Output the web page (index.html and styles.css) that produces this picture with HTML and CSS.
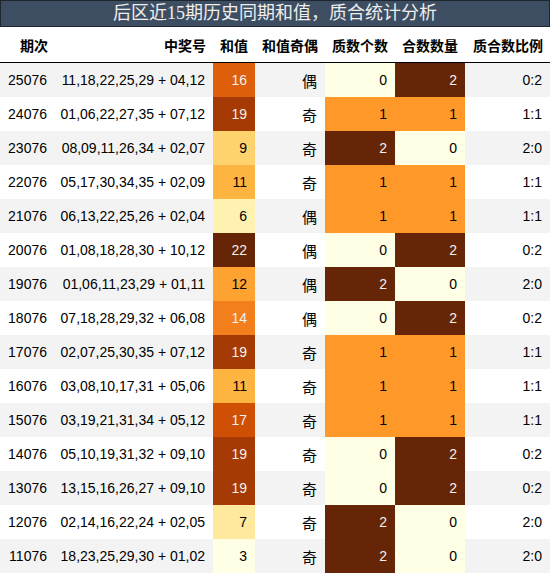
FILE: index.html
```html
<!DOCTYPE html>
<html lang="zh">
<head>
  <meta charset="UTF-8" />
  <title>后区近15期历史同期和值</title>
  <link rel="stylesheet" href="styles.css">
</head>
<body>

<div class="caption">后区近15期历史同期和值，质合统计分析</div>

<table class="stats">
  <colgroup>
    <col class="c-issue"><col class="c-nums"><col class="c-sum"><col class="c-parity">
    <col class="c-prime"><col class="c-comp"><col class="c-ratio">
  </colgroup>
  <thead>
    <tr>
      <th>期次</th><th>中奖号</th><th>和值</th><th>和值奇偶</th><th>质数个数</th><th>合数数量</th><th>质合数比例</th>
    </tr>
  </thead>
  <tbody>
    <tr><td>25076</td><td>11,18,22,25,29 + 04,12</td><td class="lt" style="background:#dd5f0c">16</td><td class="cjk">偶</td><td style="background:#ffffe5">0</td><td class="lt" style="background:#662506">2</td><td>0:2</td></tr>
    <tr><td>24076</td><td>01,06,22,27,35 + 07,12</td><td class="lt" style="background:#a63a04">19</td><td class="cjk">奇</td><td style="background:#fe9929">1</td><td style="background:#fe9929">1</td><td>1:1</td></tr>
    <tr><td>23076</td><td>08,09,11,26,34 + 02,07</td><td style="background:#fed36e">9</td><td class="cjk">奇</td><td class="lt" style="background:#662506">2</td><td style="background:#ffffe5">0</td><td>2:0</td></tr>
    <tr><td>22076</td><td>05,17,30,34,35 + 02,09</td><td style="background:#feb441">11</td><td class="cjk">奇</td><td style="background:#fe9929">1</td><td style="background:#fe9929">1</td><td>1:1</td></tr>
    <tr><td>21076</td><td>06,13,22,25,26 + 02,04</td><td style="background:#fff2b1">6</td><td class="cjk">偶</td><td style="background:#fe9929">1</td><td style="background:#fe9929">1</td><td>1:1</td></tr>
    <tr><td>20076</td><td>01,08,18,28,30 + 10,12</td><td class="lt" style="background:#662506">22</td><td class="cjk">偶</td><td style="background:#ffffe5">0</td><td class="lt" style="background:#662506">2</td><td>0:2</td></tr>
    <tr><td>19076</td><td>01,06,11,23,29 + 01,11</td><td style="background:#fea231">12</td><td class="cjk">偶</td><td class="lt" style="background:#662506">2</td><td style="background:#ffffe5">0</td><td>2:0</td></tr>
    <tr><td>18076</td><td>07,18,28,29,32 + 06,08</td><td class="lt" style="background:#f37f1c">14</td><td class="cjk">偶</td><td style="background:#ffffe5">0</td><td class="lt" style="background:#662506">2</td><td>0:2</td></tr>
    <tr><td>17076</td><td>02,07,25,30,35 + 07,12</td><td class="lt" style="background:#a63a04">19</td><td class="cjk">奇</td><td style="background:#fe9929">1</td><td style="background:#fe9929">1</td><td>1:1</td></tr>
    <tr><td>16076</td><td>03,08,10,17,31 + 05,06</td><td style="background:#feb441">11</td><td class="cjk">奇</td><td style="background:#fe9929">1</td><td style="background:#fe9929">1</td><td>1:1</td></tr>
    <tr><td>15076</td><td>03,19,21,31,34 + 05,12</td><td class="lt" style="background:#cf5004">17</td><td class="cjk">奇</td><td style="background:#fe9929">1</td><td style="background:#fe9929">1</td><td>1:1</td></tr>
    <tr><td>14076</td><td>05,10,19,31,32 + 09,10</td><td class="lt" style="background:#a63a04">19</td><td class="cjk">奇</td><td style="background:#ffffe5">0</td><td class="lt" style="background:#662506">2</td><td>0:2</td></tr>
    <tr><td>13076</td><td>13,15,16,26,27 + 09,10</td><td class="lt" style="background:#a63a04">19</td><td class="cjk">奇</td><td style="background:#ffffe5">0</td><td class="lt" style="background:#662506">2</td><td>0:2</td></tr>
    <tr><td>12076</td><td>02,14,16,22,24 + 02,05</td><td style="background:#fee99f">7</td><td class="cjk">奇</td><td class="lt" style="background:#662506">2</td><td style="background:#ffffe5">0</td><td>2:0</td></tr>
    <tr><td>11076</td><td>18,23,25,29,30 + 01,02</td><td style="background:#ffffe5">3</td><td class="cjk">奇</td><td class="lt" style="background:#662506">2</td><td style="background:#ffffe5">0</td><td>2:0</td></tr>
  </tbody>
</table>

</body>
</html>
```
FILE: styles.css
```css
body { margin: 0; padding: 0; background: #fff; font-family: "Liberation Sans", "Noto Sans CJK SC", sans-serif; color: #000; }
.caption { height: 25px; line-height: 25px; background: #3d4d62; border: 1px solid #1e2630; color: #eeeeee; text-align: center;
           font-family: "Liberation Serif", "Noto Sans CJK SC", serif; font-size: 18px; }
.stats { width: 550px; border-collapse: collapse; table-layout: fixed; font-size: 14px; }
.c-issue { width: 55px; }
.c-nums { width: 158px; }
.c-sum { width: 42px; }
.c-parity, .c-prime, .c-comp { width: 70px; }
.c-ratio { width: 85px; }
.stats th { height: 35px; padding: 0 7px 0 0; text-align: right; font-weight: bold; background: #fff;
            border-bottom: 1px solid #000; white-space: nowrap; }
.stats td { height: 34px; padding: 0 8px 0 0; text-align: right; white-space: nowrap; }
.stats tbody tr:nth-child(odd) { background: #f3f3f3; }
.stats td.lt { color: #f1f1f1; }
.stats td.cjk { font-family: "Noto Sans CJK SC", sans-serif; font-size: 15px; }
```
